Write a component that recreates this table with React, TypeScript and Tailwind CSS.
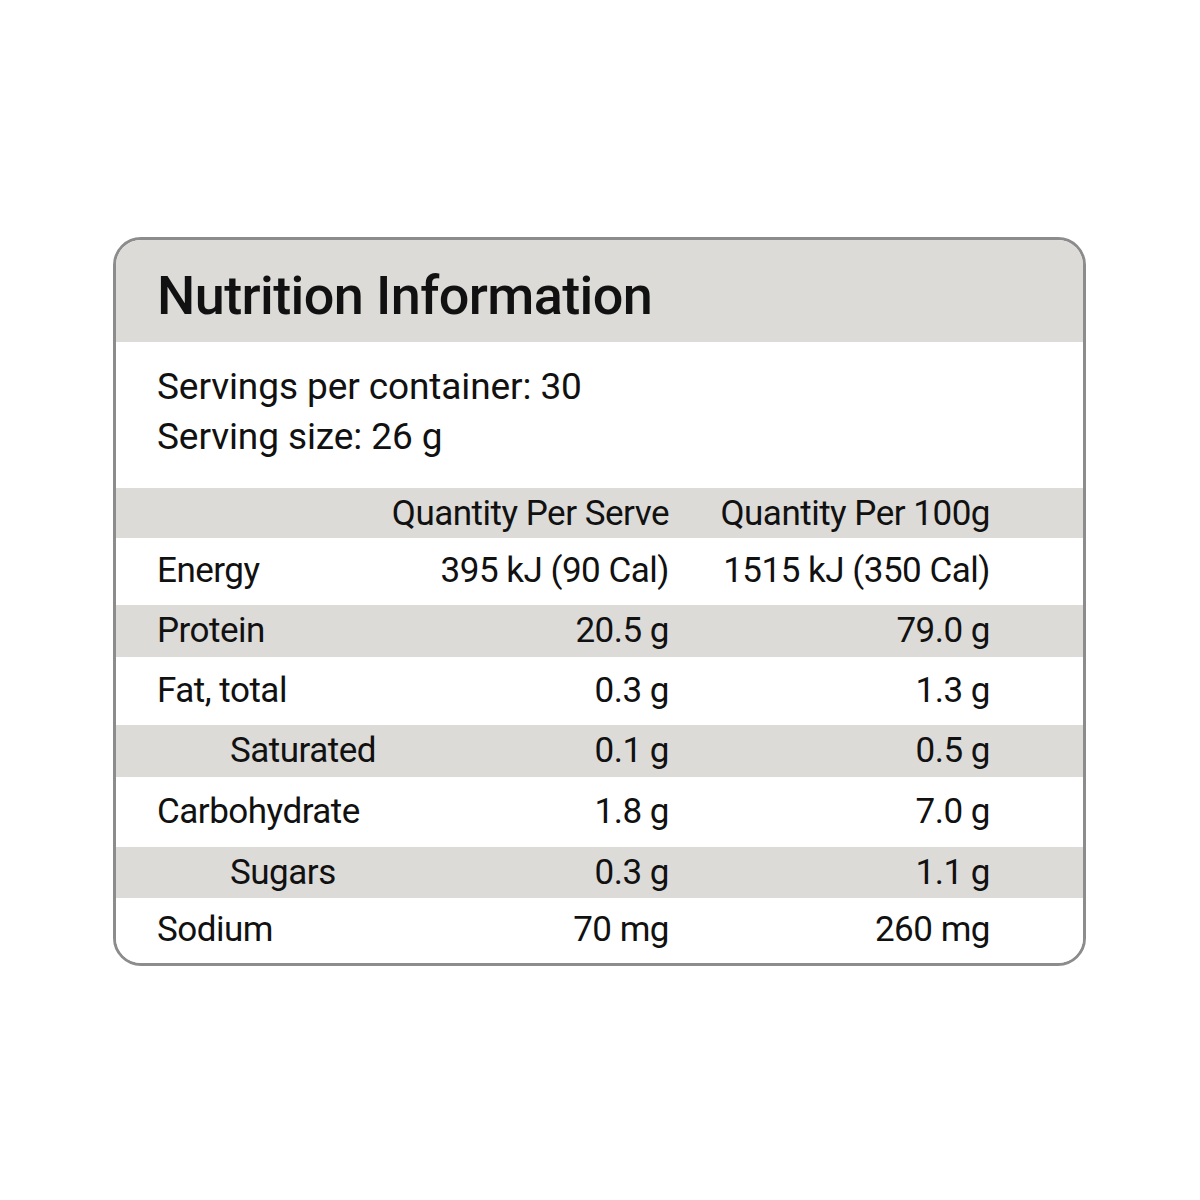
const rows = [
  { label: 'Energy', serve: '395 kJ (90 Cal)', per100: '1515 kJ (350 Cal)', h: 'h-[67px]', shade: false, indent: false },
  { label: 'Protein', serve: '20.5 g', per100: '79.0 g', h: 'h-[52px]', shade: true, indent: false },
  { label: 'Fat, total', serve: '0.3 g', per100: '1.3 g', h: 'h-[68px]', shade: false, indent: false },
  { label: 'Saturated', serve: '0.1 g', per100: '0.5 g', h: 'h-[52px]', shade: true, indent: true },
  { label: 'Carbohydrate', serve: '1.8 g', per100: '7.0 g', h: 'h-[70px]', shade: false, indent: false },
  { label: 'Sugars', serve: '0.3 g', per100: '1.1 g', h: 'h-[51px]', shade: true, indent: true },
  { label: 'Sodium', serve: '70 mg', per100: '260 mg', h: 'h-[65px]', shade: false, indent: false },
]

export default function App() {
  return (
    <div className="w-[1200px] h-[1200px] bg-white pt-[237px] pl-[113px] font-['Roboto',sans-serif] text-[#111]">
      <div className="w-[973px] rounded-[28px] border-[3px] border-[#8c8c8c] overflow-hidden">
        <div className="h-[102px] bg-[#dcdbd8] pl-[41px] flex items-center">
          <h1 className="text-[54px] font-medium tracking-[-0.6px] leading-none pt-[10px]">Nutrition Information</h1>
        </div>

        <div className="h-[146px] pl-[41px] pt-[20px] text-[37px] leading-[50px] tracking-[-0.1px]">
          <p>Servings per container: 30</p>
          <p>Serving size: 26 g</p>
        </div>

        <div className="text-[35px] tracking-[-0.5px]">
          <div className="h-[50px] bg-[#dcdbd8] grid grid-cols-[212px_300px_321px] pl-[41px] items-center">
            <span />
            <span className="text-right">Quantity Per Serve</span>
            <span className="text-right">Quantity Per 100g</span>
          </div>
          {rows.map((r) => (
            <div
              key={r.label}
              className={`${r.h} ${r.shade ? 'bg-[#dcdbd8]' : 'bg-white'} grid grid-cols-[212px_300px_321px] pl-[41px] items-center`}
            >
              <span className={r.indent ? 'pl-[73px]' : ''}>{r.label}</span>
              <span className="text-right">{r.serve}</span>
              <span className="text-right">{r.per100}</span>
            </div>
          ))}
        </div>
      </div>
    </div>
  )
}
